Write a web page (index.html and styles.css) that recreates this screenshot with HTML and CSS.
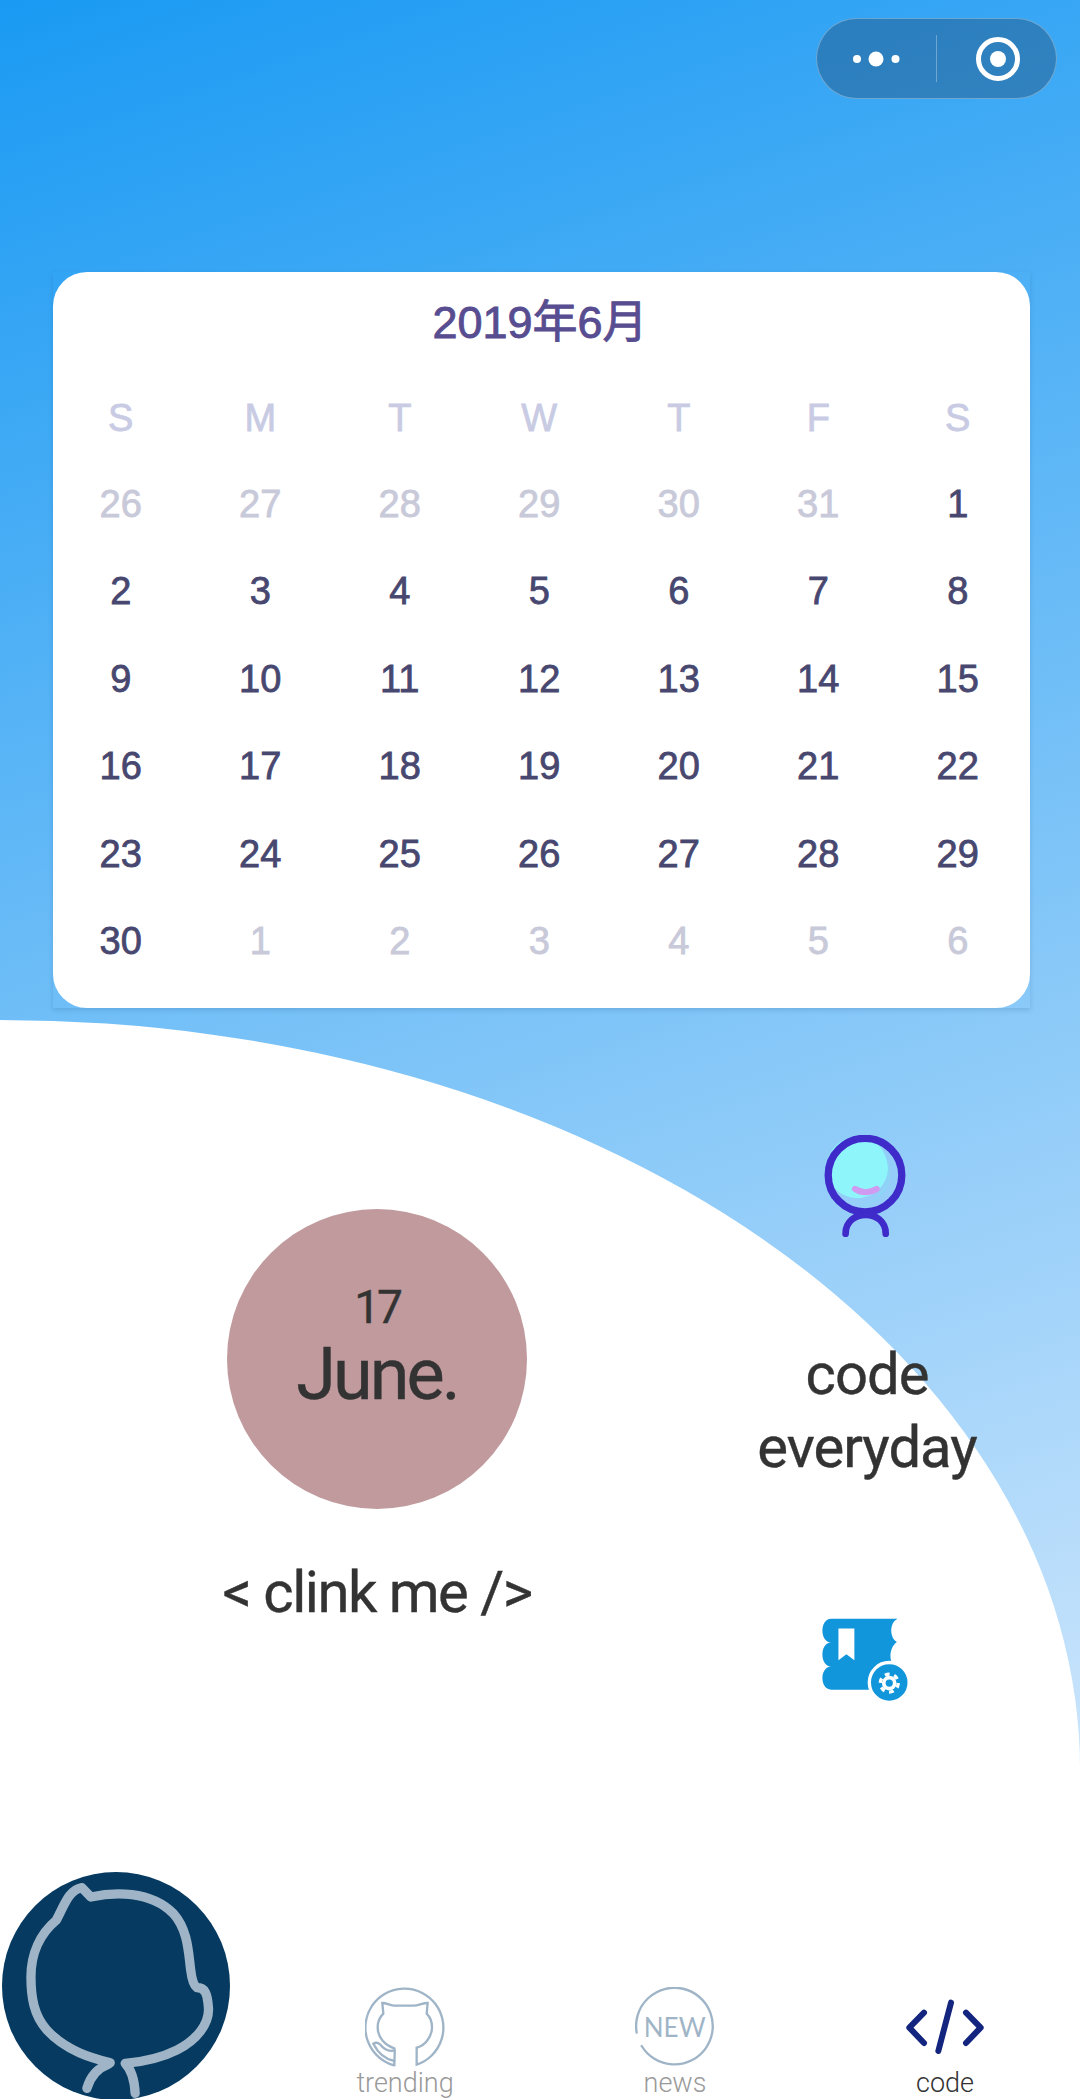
FILE: index.html
```html
<!DOCTYPE html>
<html lang="zh">
<head>
<meta charset="utf-8">
<title>code everyday</title>
<link rel="stylesheet" href="styles.css">
</head>
<body>
<div class="page">
  <header class="top">
    <div class="capsule">
      <svg class="cap-dots" viewBox="0 0 119 79"><circle cx="40" cy="40" r="4"/><circle cx="59" cy="40" r="7.5"/><circle cx="78.500" cy="40" r="4"/></svg>
      <span class="cap-line"></span>
      <svg class="cap-target" viewBox="0 0 119 79"><circle class="ring" cx="61" cy="40" r="19.500"/><circle cx="61" cy="40" r="8"/></svg>
    </div>
  </header>

  <section class="card-shell">
    <div class="card">
      <h1 class="month">2019年6月</h1>
      <div class="cal">
        <span class="wk">S</span><span class="wk">M</span><span class="wk">T</span><span class="wk">W</span><span class="wk">T</span><span class="wk">F</span><span class="wk">S</span>
        <span class="mut">26</span><span class="mut">27</span><span class="mut">28</span><span class="mut">29</span><span class="mut">30</span><span class="mut">31</span><span>1</span>
        <span>2</span><span>3</span><span>4</span><span>5</span><span>6</span><span>7</span><span>8</span>
        <span>9</span><span>10</span><span>11</span><span>12</span><span>13</span><span>14</span><span>15</span>
        <span>16</span><span>17</span><span>18</span><span>19</span><span>20</span><span>21</span><span>22</span>
        <span>23</span><span>24</span><span>25</span><span>26</span><span>27</span><span>28</span><span>29</span>
        <span>30</span><span class="mut">1</span><span class="mut">2</span><span class="mut">3</span><span class="mut">4</span><span class="mut">5</span><span class="mut">6</span>
      </div>
    </div>
  </section>

  <main class="sheet">
    <div class="columns">
      <div class="left">
        <div class="disc">
          <span class="day">17</span>
          <span class="mon">June.</span>
        </div>
        <p class="clink">&lt; clink me /&gt;</p>
      </div>
      <div class="right">
        <svg class="robot" viewBox="130 105 250 305">
          <circle class="r-fill" cx="232" cy="202" r="92"/>
          <path class="r-shade" d="M305 150a110 110 0 0 1 -70 170a110 110 0 0 0 90 -70a110 110 0 0 0 -20 -100z"/>
          <circle class="r-ring" cx="255" cy="225" r="110"/>
          <path class="r-smile" d="M225 266Q257 286 290 266"/>
          <path class="r-legs" d="M197 400C197 325 317 325 317 400"/>
        </svg>
        <p class="motto">code<br>everyday</p>
        <svg class="book" viewBox="120 80 270 265">
          <path class="b-body" d="M150 88H350C325 100 325 145 348 158C325 175 325 210 335 225L270 302H150C115 302 115 232 150 232C115 232 115 160 150 160C115 160 115 88 150 88Z"/>
          <path class="b-mark" d="M172 118H220V213L196 195L172 213Z"/>
          <circle class="b-badge" cx="325" cy="280" r="60"/>
          <circle class="b-gear" cx="325" cy="282" r="22"/>
          <circle class="b-teeth" cx="325" cy="282" r="27"/>
          <circle class="b-hole" cx="325" cy="282" r="11"/>
        </svg>
      </div>
    </div>

    <nav class="tabs">
      <div class="fab">
        <svg viewBox="5 65 685 685">
          <circle class="fab-bg" cx="347.500" cy="407.500" r="342.500"/>
          <path class="fab-line" d="M330 638C280 625 200 605 140 540C100 495 92 440 92 380C92 310 120 250 168 210C190 170 205 118 245 112L272 140C340 125 450 120 520 190C565 240 565 310 572 360C575 385 580 405 590 412C615 412 622 430 625 470C630 520 590 570 530 600C480 625 430 635 375 640C395 660 403 690 405 730"/>
          <path class="fab-line" d="M325 642C290 655 270 680 260 715"/>
        </svg>
      </div>
      <a class="tab">
        <svg class="tab-ico" viewBox="1095 410 240 240">
          <path class="t-line" d="M1183 645A117 117 0 1 1 1250 643V592C1272 587 1296 562 1296 530C1296 512 1288 498 1280 490L1283 458C1268 458 1252 467 1240 466H1186C1174 467 1160 458 1147 458L1150 490C1140 500 1133 515 1133 530C1133 562 1155 585 1183 594C1186 600 1183 615 1183 645"/>
          <path class="t-line" d="M1183 600C1165 605 1150 595 1140 582C1132 575 1125 577 1120 580C1130 600 1150 625 1183 632"/>
        </svg>
        <span class="tab-txt">trending</span>
      </a>
      <a class="tab">
        <svg class="tab-ico" viewBox="105 108 240 240">
          <path class="t-line" d="M110 245A115 115 0 1 1 125 285"/>
          <text class="t-new" x="224" y="258" text-anchor="middle">NEW</text>
        </svg>
        <span class="tab-txt">news</span>
      </a>
      <a class="tab tab-on">
        <svg class="tab-ico" viewBox="915 110 240 240">
          <path class="c-line" d="M972 187L928 232L972 278M1053 157L1015 302M1098 187L1142 232L1098 278"/>
        </svg>
        <span class="tab-txt">code</span>
      </a>
    </nav>
  </main>
</div>
</body>
</html>
```
FILE: styles.css
```css
* { box-sizing: border-box; }
html, body { margin: 0; padding: 0; }
body { width: 1080px; height: 2099px; overflow: hidden; }
.page {
  width: 1080px; height: 2099px; display: flex; flex-direction: column;
  background: linear-gradient(161.5deg, #1a9af3 0%, #e6f0fd 100%);
  font-family: "Liberation Sans", "Noto Sans CJK SC", sans-serif;
}
.top { display: flex; justify-content: flex-end; padding: 18px 23px 0 0; }
.capsule {
  width: 241px; height: 81px; display: flex; align-items: center;
  background: rgba(30, 70, 110, .4); background-clip: border-box;
  border: 1px solid rgba(255, 255, 255, .3); border-radius: 41px;
}
.cap-dots, .cap-target { width: 119px; height: 79px; fill: #fff; flex: none; }
.cap-line { width: 1px; height: 47px; background: rgba(255, 255, 255, .3); flex: none; }
.ring { fill: none; stroke: #fff; stroke-width: 5px; }

.card-shell {
  width: 977px; height: 736px; margin: 173px 0 0 53px;
  box-shadow: 0 2px 5px rgba(20, 70, 120, .18);
}
.card { height: 100%; background: #fff; border-radius: 34px; }
.month {
  margin: 0; height: 104px; padding: 0 3px 2px 0; line-height: 102px; text-align: center;
  font-size: 45px; font-weight: 400; color: #574d90;
  -webkit-text-stroke: .9px #574d90;
}
.cal {
  display: grid; grid-template-columns: repeat(7, 139.500px); grid-template-rows: 84.500px;
  grid-auto-rows: 87.500px;
  margin-left: -2px; font-size: 38px; color: #47476f;
  -webkit-text-stroke: .8px currentColor;
}
.cal span { display: flex; align-items: center; justify-content: center; }
.cal .wk { color: #c8cbe3; }
.cal .mut { color: #c8c9d9; }

.sheet {
  flex: 1; margin-top: 12px; background: #fff; display: flex; flex-direction: column;
  border-top-right-radius: 1080px 750px; padding-top: 115px;
  font-family: Roboto, sans-serif; color: #333;
  -webkit-text-stroke: .4px #333;
}
.columns { display: grid; grid-template-columns: 554px 426px; padding-left: 100px; flex: 1; }
.left { display: flex; flex-direction: column; align-items: center; padding-top: 74px; }
.disc {
  width: 300px; height: 300px; border-radius: 50%; background: #c09a9d;
  display: flex; flex-direction: column; align-items: center; padding-top: 68px;
}
.day { font-size: 46px; line-height: 60px; font-weight: 400; letter-spacing: -3px; }
.mon { font-size: 72px; line-height: 84px; font-weight: 400; letter-spacing: -3px; margin-top: -4px; }
.clink { margin: 50px 0 0; font-size: 58px; line-height: 66px; letter-spacing: -1.500px; white-space: nowrap; }
.right { display: flex; flex-direction: column; align-items: center; }
.robot { width: 84px; height: 102px; margin-left: -4px; flex: none; }
.r-fill { fill: #8ef5fb; }
.r-shade { fill: #8cd6f5; }
.r-ring { fill: none; stroke: #3f2bc9; stroke-width: 22px; }
.r-smile { fill: none; stroke: #cf9af0; stroke-width: 18px; stroke-linecap: round; }
.r-legs { fill: none; stroke: #3f2bc9; stroke-width: 20px; stroke-linecap: round; }
.motto { margin: 101px 0 0; font-size: 58px; line-height: 73px; text-align: center; letter-spacing: -1px; }
.book { width: 90px; height: 88px; margin: 132px 2px 0 0; flex: none; }
.b-body { fill: #1296db; }
.b-mark, .b-gear { fill: #fff; }
.b-badge { fill: #1296db; stroke: #fff; stroke-width: 10px; }
.b-teeth { fill: none; stroke: #fff; stroke-width: 10px; stroke-dasharray: 14.300 14; }
.b-hole { fill: #1296db; }

.tabs {
  display: grid; grid-template-columns: repeat(4, 270px); height: 227px; align-items: end;
  -webkit-text-stroke: 0;
}
.fab { width: 228px; height: 228px; margin-left: 2px; align-self: start; }
.fab svg { width: 228px; height: 228px; display: block; }
.fab-bg { fill: #063a60; }
.fab-line { fill: none; stroke: #9fb5c7; stroke-width: 28px; stroke-linecap: round; stroke-linejoin: round; }
.tab { display: flex; flex-direction: column; align-items: center; }
.tab-ico { width: 80px; height: 80px; flex: none; }
.t-line { fill: none; stroke: #9fb5c7; stroke-width: 7px; stroke-linecap: round; }
.t-new { fill: #9fb5c7; font-family: Lato, sans-serif; font-size: 78px; }
.c-line { fill: none; stroke: #13257f; stroke-width: 18px; stroke-linecap: round; stroke-linejoin: round; }
.tab-txt { font-family: Roboto, sans-serif; font-weight: 300; font-size: 27px; line-height: 33px; color: #999; }
.tab-on .tab-txt { color: #333; }
```
